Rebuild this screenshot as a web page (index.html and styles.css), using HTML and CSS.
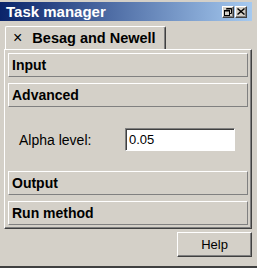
FILE: index.html
```html
<!DOCTYPE html>
<html lang="en">
<head>
    <meta charset="UTF-8">
    <title>Task manager</title>
    <link rel="stylesheet" href="styles.css">
</head>
<body>
    <div class="window">
        <!-- barre de titre -->
        <div class="titlebar">
            <span class="title">Task manager</span>
            <div class="title-btns">
                <button class="cap-btn" title="Restore">
                    <svg width="8" height="8" viewBox="0 0 8 8">
                        <path d="M2.5 0.5h5v5h-2" fill="none" stroke="#000"/>
                        <path d="M2 1h6" stroke="#000"/>
                        <rect x="0.5" y="2.5" width="5" height="5" fill="none" stroke="#000"/>
                        <path d="M0 3h6" stroke="#000"/>
                    </svg>
                </button>
                <button class="cap-btn" title="Close">
                    <svg width="8" height="7" viewBox="0 0 8 7">
                        <path d="M0.5 0.5l7 6M7.5 0.5l-7 6" stroke="#000" stroke-width="1.4"/>
                    </svg>
                </button>
            </div>
        </div>

        <!-- onglets -->
        <div class="tabs">
            <div class="tab active"><span class="tab-close">&times;</span>Besag and Newell</div>
        </div>

        <div class="panel">
            <div class="section">Input</div>
            <div class="section">Advanced</div>
            <div class="section-body">
                <label for="alpha">Alpha level:</label>
                <input type="text" id="alpha" class="field" value="0.05">
            </div>
            <div class="section">Output</div>
            <div class="section">Run method</div>
        </div>

        <div class="footer">
            <button class="btn">Help</button>
        </div>
    </div>
</body>
</html>
```

FILE: styles.css
```css
/* fenetre principale */
body {
    margin: 0;
    background-color: #d4d0c8;
    font-family: "Liberation Sans", Arial, sans-serif;
}
.window {
    width: 257px;
    height: 268px;
    box-sizing: border-box;
    padding-top: 2px;
    border-bottom: 2px solid #404040;
}

/* barre de titre */
.titlebar {
    width: 252px;
    height: 19px;
    box-sizing: border-box;
    display: flex;
    align-items: center;
    justify-content: space-between;
    padding: 0 5px 0 6px;
    background: linear-gradient(to right, #0a246a, #a6caf0);
}
.title {
    color: white;
    font-weight: bold;
    font-size: 15px;
}
.title-btns {
    display: flex;
    gap: 1px;
}
.cap-btn {
    width: 12px;
    height: 12px;
    padding: 0;
    background-color: #d4d0c8;
    border: 1px solid;
    border-color: #fff #404040 #404040 #fff;
    box-shadow: inset -1px -1px #808080;
    display: flex;
    align-items: center;
    justify-content: center;
}

/* onglets */
.tabs {
    display: flex;
    padding-left: 5px;
    margin-top: 5px;
}
.tab {
    height: 23px;
    box-sizing: border-box;
    display: flex;
    align-items: center;
    padding: 0 9px 0 7px;
    font-size: 14.5px;
    font-weight: bold;
    border-top: 1px solid #fff;
    border-left: 1px solid #fff;
    border-right: 1px solid #404040;
    box-shadow: inset -1px 0 #808080;
    border-radius: 2px 2px 0 0;
}
.tab-close {
    font-weight: normal;
    font-size: 16px;
    margin-right: 10px;
}

/* panneau */
.panel {
    margin-left: 4px;
    width: 248px;
    box-sizing: border-box;
    display: flex;
    flex-direction: column;
    gap: 6px;
    padding: 3px 3px 3px 3px;
    border: 1px solid;
    border-color: #fff #404040 #404040 #fff;
    box-shadow: inset -1px -1px #808080;
}
.section {
    height: 24px;
    box-sizing: border-box;
    display: flex;
    align-items: center;
    padding-left: 3px;
    font-size: 14px;
    font-weight: bold;
    border: 1px solid;
    border-color: #fff #808080 #808080 #fff;
}
.section-body {
    display: flex;
    align-items: center;
    padding: 15px 0 14px 11px;
    font-size: 14px;
}
.section-body label {
    width: 106px;
}
.field {
    width: 110px;
    height: 23px;
    box-sizing: border-box;
    padding: 0 3px;
    font-family: "Liberation Sans", Arial, sans-serif;
    font-size: 13px;
    background-color: white;
    border: 1px solid;
    border-color: #808080 #fff #fff #808080;
    box-shadow: inset 1px 1px #404040;
    outline: none;
}

/* bas de fenetre */
.footer {
    width: 252px;
    display: flex;
    justify-content: flex-end;
    padding-top: 3px;
}
.btn {
    width: 75px;
    height: 25px;
    font-family: "Liberation Sans", Arial, sans-serif;
    font-size: 13px;
    color: black;
    background-color: #d4d0c8;
    border: 1px solid;
    border-color: #fff #404040 #404040 #fff;
    box-shadow: inset -1px -1px #808080;
    padding: 0;
}
```
